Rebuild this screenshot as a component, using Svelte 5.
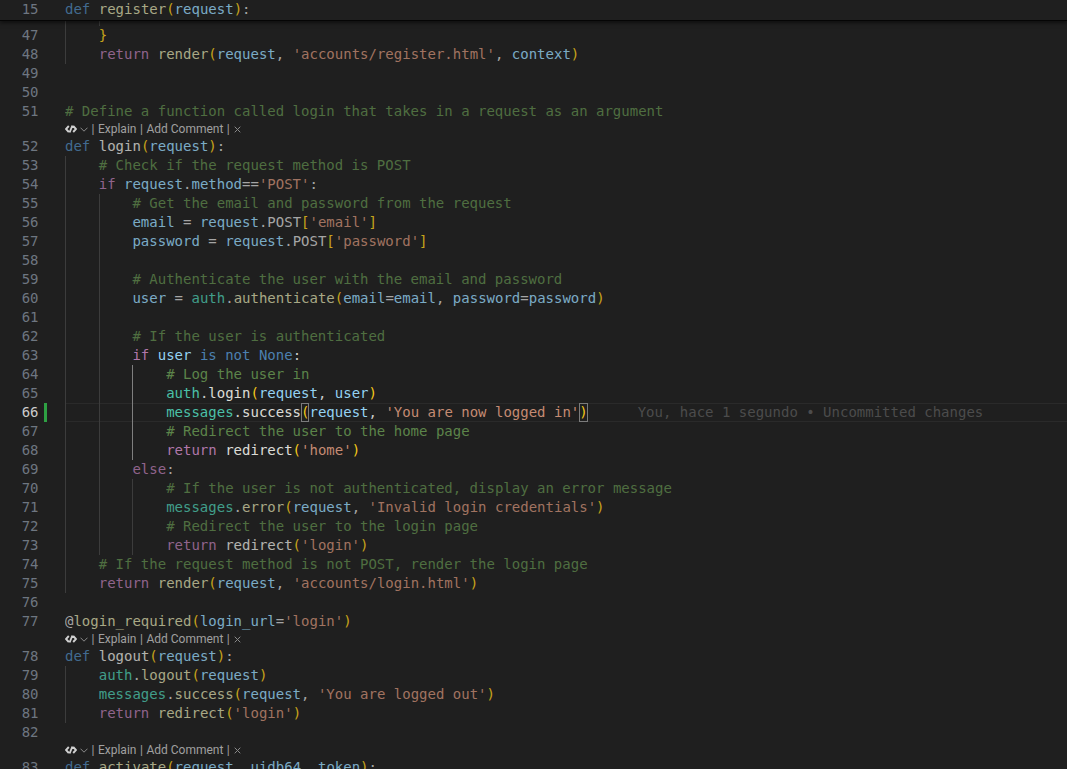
<script>
  const rows = [
    { n: 47, g: 1, src: "«b|}»" },
    { n: 48, g: 1, src: "«k|return» «f|render»«b|(»«v|request»«p|,» «s|'accounts/register.html'»«p|,» «v|context»«b|)»" },
    { n: 49, g: 0, src: "" },
    { n: 50, g: 0, src: "" },
    { n: 51, g: 0, src: "«c|# Define a function called login that takes in a request as an argument»" },
    { lens: true },
    { n: 52, g: 0, src: "«d|def» «l|login»«b|(»«v|request»«b|)»«p|:»" },
    { n: 53, g: 1, src: "«c|# Check if the request method is POST»" },
    { n: 54, g: 1, src: "«k|if» «v|request»«p|.»«v|method»«p|==»«s|'POST'»«p|:»" },
    { n: 55, g: 2, src: "«c|# Get the email and password from the request»" },
    { n: 56, g: 2, src: "«v|email» «p|=» «v|request»«p|.POST»«b|[»«s|'email'»«b|]»" },
    { n: 57, g: 2, src: "«v|password» «p|=» «v|request»«p|.POST»«b|[»«s|'password'»«b|]»" },
    { n: 58, g: 2, src: "" },
    { n: 59, g: 2, src: "«c|# Authenticate the user with the email and password»" },
    { n: 60, g: 2, src: "«v|user» «p|=» «t|auth»«p|.»«f|authenticate»«b|(»«v|email»«p|=»«v|email»«p|,» «v|password»«p|=»«v|password»«b|)»" },
    { n: 61, g: 2, src: "" },
    { n: 62, g: 2, src: "«c|# If the user is authenticated»" },
    { n: 63, g: 2, hot: true, src: "«k|if» «v|user» «d|is» «d|not» «d|None»«p|:»" },
    { n: 64, g: 3, on: true, hot: true, src: "«c|# Log the user in»" },
    { n: 65, g: 3, on: true, hot: true, src: "«t|auth»«p|.»«l|login»«b|(»«v|request»«p|,» «v|user»«b|)»" },
    { n: 66, g: 3, on: true, hot: true, cur: true },
    { n: 67, g: 3, on: true, hot: true, src: "«c|# Redirect the user to the home page»" },
    { n: 68, g: 3, on: true, hot: true, src: "«k|return» «l|redirect»«b|(»«s|'home'»«b|)»" },
    { n: 69, g: 2, src: "«k|else»«p|:»" },
    { n: 70, g: 3, src: "«c|# If the user is not authenticated, display an error message»" },
    { n: 71, g: 3, src: "«t|messages»«p|.»«f|error»«b|(»«v|request»«p|,» «s|'Invalid login credentials'»«b|)»" },
    { n: 72, g: 3, src: "«c|# Redirect the user to the login page»" },
    { n: 73, g: 3, src: "«k|return» «l|redirect»«b|(»«s|'login'»«b|)»" },
    { n: 74, g: 1, src: "«c|# If the request method is not POST, render the login page»" },
    { n: 75, g: 1, src: "«k|return» «f|render»«b|(»«v|request»«p|,» «s|'accounts/login.html'»«b|)»" },
    { n: 76, g: 0, src: "" },
    { n: 77, g: 0, src: "«p|@»«f|login_required»«b|(»«v|login_url»«p|=»«s|'login'»«b|)»" },
    { lens: true },
    { n: 78, g: 0, src: "«d|def» «l|logout»«b|(»«v|request»«b|)»«p|:»" },
    { n: 79, g: 1, src: "«t|auth»«p|.»«f|logout»«b|(»«v|request»«b|)»" },
    { n: 80, g: 1, src: "«t|messages»«p|.»«f|success»«b|(»«v|request»«p|,» «s|'You are logged out'»«b|)»" },
    { n: 81, g: 1, src: "«k|return» «f|redirect»«b|(»«s|'login'»«b|)»" },
    { n: 82, g: 0, src: "" },
    { lens: true },
    { n: 83, g: 0, src: "«d|def» «f|activate»«b|(»«v|request»«p|,» «v|uidb64»«p|,» «v|token»«b|)»«p|:»" }
  ];

  function parse(src) {
    const out = [];
    const re = /«(\w+)\|([^»]*)»|([^«]+)/g;
    let m;
    while ((m = re.exec(src))) out.push(m[1] ? { c: m[1], t: m[2] } : { c: "p", t: m[3] });
    return out;
  }

  const sticky = parse("«d|def» «f|register»«b|(»«v|request»«b|)»«p|:»");
  const curA = parse("«t|messages»«p|.»«l|success»");
  const curB = parse("«v|request»«p|,» «s|'You are now logged in'»");
</script>

{#snippet toks(list)}
  {#each list as tk}<span class={tk.c}>{tk.t}</span>{/each}
{/snippet}

{#snippet lens()}
  <div class="lens">
    <svg class="ico" viewBox="0 0 12 10" width="12" height="10" aria-hidden="true">
      <path d="M3.8 2 1 5l2.8 3M8.2 2 11 5 8.2 8M7.4 1.5 4.6 8.5" fill="none" stroke="#d0d0d0" stroke-width="1.9" />
    </svg>
    <svg class="chev" viewBox="0 0 8 5" width="8" height="5" aria-hidden="true">
      <path d="M.5.7 4 4.2 7.5.7" fill="none" stroke="#8a8a8a" stroke-width="1" />
    </svg>
    <span class="sep">|</span><span>Explain</span><span class="sep">|</span><span>Add Comment</span><span class="sep">|</span>
    <svg class="close" viewBox="0 0 7 7" width="7" height="7" aria-hidden="true">
      <path d="M.7.7l5.6 5.6M6.3.7.7 6.3" fill="none" stroke="#8a8a8a" stroke-width="1" />
    </svg>
  </div>
{/snippet}

<div class="editor">
  <div class="sticky">
    <div class="row">
      <div class="gutter"><span class="num">15</span></div>
      <div class="code"><span class="txt">{@render toks(sticky)}</span></div>
    </div>
  </div>

  <div class="scroll">
    <div class="row tail">
      <div class="gutter"></div>
      <div class="code"><i class="guide"></i><i class="guide"></i></div>
    </div>

    {#each rows as r}
      {#if r.lens}
        <div class="row lensrow">
          <div class="gutter"></div>
          {@render lens()}
        </div>
      {:else}
        <div class="row">
          <div class="gutter">
            <span class="num" class:active={r.cur}>{r.n}</span>
            {#if r.cur}<i class="dirty"></i>{/if}
          </div>
          <div class="code" class:curline={r.cur}>
            {#each Array(r.g) as _, i}<i class="guide" class:on={r.on && i === 2}></i>{/each}
            {#if r.cur}
              <span class="txt hot">{@render toks(curA)}<span class="match b">(</span>{@render toks(curB)}<span class="match b">)</span></span>
              <span class="blame">You, hace 1 segundo • Uncommitted changes</span>
            {:else}
              <span class="txt" class:hot={r.hot}>{@render toks(parse(r.src))}</span>
            {/if}
          </div>
        </div>
      {/if}
    {/each}
  </div>
</div>

<style>
  :global(body) {
    margin: 0;
    background: #1f1f1f;
  }
  .editor {
    position: relative;
    width: 1067px;
    height: 769px;
    overflow: hidden;
    background: #1f1f1f;
    font-family: "DejaVu Sans Mono", "Liberation Mono", monospace;
    font-size: 14px;
    line-height: 19px;
    color: #d4d4d4;
  }
  .sticky {
    position: relative;
    z-index: 2;
    height: 20px;
    background: #1f1f1f;
    border-bottom: 1px solid #050505;
    box-shadow: 0 2px 4px rgba(0, 0, 0, 0.55);
  }
  .row {
    display: flex;
    height: 19px;
  }
  .tail {
    height: 5px;
    overflow: hidden;
  }
  .lensrow {
    height: 16px;
  }
  .gutter {
    position: relative;
    flex: none;
    width: 65px;
    box-sizing: border-box;
  }
  .num {
    display: block;
    width: 38.5px;
    text-align: right;
    color: #6e7681;
  }
  .num.active {
    color: #cccccc;
  }
  .dirty {
    position: absolute;
    left: 44px;
    top: 0;
    width: 3px;
    height: 19px;
    background: #2ea043;
  }
  .code {
    flex: 1;
    display: flex;
    white-space: pre;
    min-width: 0;
  }
  .curline {
    box-sizing: border-box;
    box-shadow: inset 0 1px 0 #2a2a2a, inset 0 -1px 0 #2a2a2a;
  }
  .guide {
    flex: none;
    display: block;
    width: 33.72px;
    height: 19px;
    box-sizing: border-box;
    border-left: 1px solid #3c3c3c;
  }
  .guide.on {
    border-left-color: #7f7f7f;
  }
  .txt {
    opacity: 0.74;
  }
  .txt.hot {
    opacity: 0.95;
  }
  .blame {
    margin-left: 50px;
    color: #4c4c4c;
  }
  .match {
    display: inline-block;
    height: 19px;
    box-sizing: border-box;
    outline: 1px solid #808080;
    outline-offset: -1px;
  }
  .lens {
    display: flex;
    align-items: center;
    height: 16px;
    font-family: Roboto, "Noto Sans", sans-serif;
    font-size: 12px;
    line-height: 16px;
    color: #a0a0a0;
  }
  .ico {
    flex: none;
  }
  .chev {
    flex: none;
    margin-left: 3px;
  }
  .sep {
    margin: 0 3.5px;
  }
  .close {
    flex: none;
    margin-left: 1px;
  }
  .d { color: #4f86b8; }
  .k { color: #b87cb2; }
  .f { color: #d8d8aa; }
  .l { color: #e6e6e0; }
  .v { color: #9cdcfe; }
  .s { color: #ce9178; }
  .c { color: #608a4d; }
  .t { color: #4ec9b0; }
  .b { color: #ffd21a; }
  .p { color: #d4d4d4; }
</style>
